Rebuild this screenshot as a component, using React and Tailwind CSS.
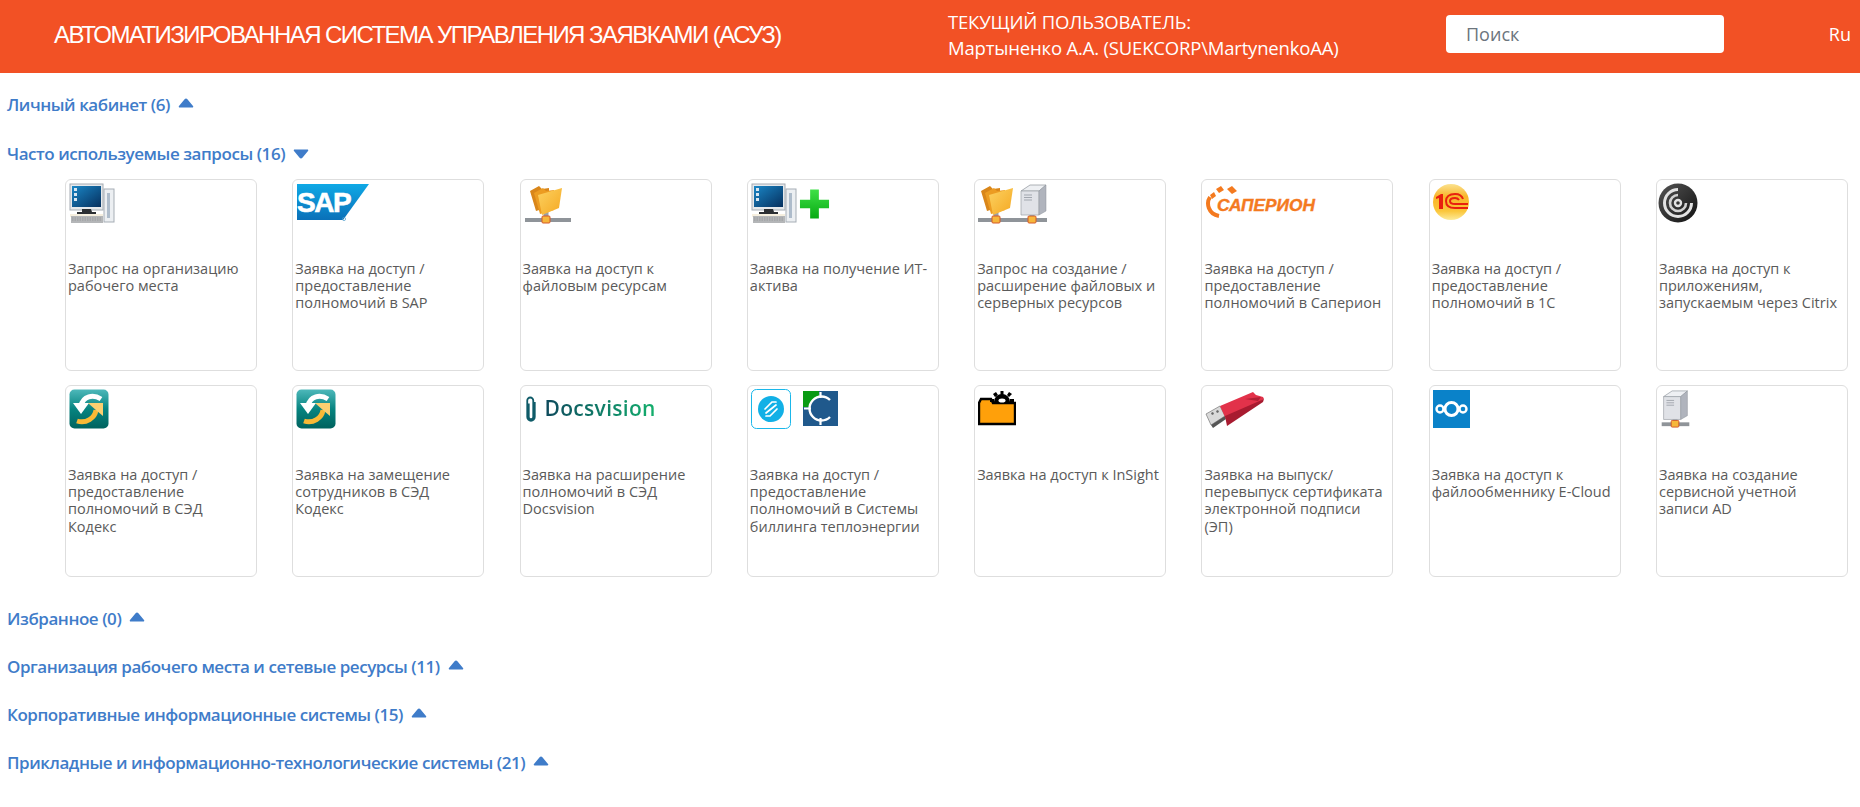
const sans = "font-['Open_Sans','Noto_Sans',sans-serif]";

const Pc = () => (
  <svg width="46" height="42" viewBox="0 0 46 42">
    <defs>
      <linearGradient id="pcScreen" x1="0" y1="0" x2="1" y2="1">
        <stop offset="0" stopColor="#1a86c6" />
        <stop offset="1" stopColor="#06305e" />
      </linearGradient>
    </defs>
    <rect x="1" y="1" width="33" height="26" fill="#e6e9ec" stroke="#a5acb3" />
    <rect x="3" y="3" width="29" height="21" fill="url(#pcScreen)" />
    <rect x="5" y="5" width="3" height="3" fill="#d8e6f2" />
    <rect x="5" y="10" width="3" height="3" fill="#d8e6f2" />
    <rect x="5" y="15" width="3" height="3" fill="#d8e6f2" />
    <path d="M13 26h9l1 3h4v2H8v-2h5z" fill="#2c2f33" />
    <path d="M1 31h33v3H1z" fill="#f6efdf" />
    <rect x="35" y="6" width="10" height="33" fill="#eceff2" stroke="#a6adb5" />
    <rect x="38" y="10" width="3" height="25" fill="#aebccb" />
    <rect x="2" y="33" width="32" height="7" fill="#b4b6b8" />
    <path d="M3 35h30M3 37h30" stroke="#8c8e90" strokeWidth=".7" strokeDasharray="1.5 1" />
  </svg>
);

const Plus = () => (
  <svg width="31" height="32" viewBox="0 0 32 32">
    <defs>
      <linearGradient id="plusGreen" x1="0" y1="0" x2="0" y2="1">
        <stop offset="0" stopColor="#3fe047" />
        <stop offset="1" stopColor="#07aa12" />
      </linearGradient>
    </defs>
    <path d="M11.500 1h9v10.500H31v9H20.500V31h-9V20.500H1v-9h10.500z" fill="url(#plusGreen)" />
  </svg>
);

const Net = ({ x }) => (
  <g>
    <rect x={x - 2.5} y="28" width="5" height="6" fill="#9aa0a6" />
    <rect x={x - 4} y="33" width="8" height="7" rx="1" fill="#f6b73c" stroke="#d4582a" />
  </g>
);

const Folder = () => (
  <g>
    <defs>
      <linearGradient id="folderFront" x1="0" y1="0" x2="1" y2="1">
        <stop offset="0" stopColor="#fcd262" />
        <stop offset="1" stopColor="#f5a821" />
      </linearGradient>
    </defs>
    <path d="M6 8l9-5 3 3 7-1v19l-13 4z" fill="#d9861a" />
    <path d="M10 10l9-5 3 3 8-1v20l-14 4z" fill="#ec9c22" />
    <path d="M14 12l24-7-3 20-17 7z" fill="url(#folderFront)" />
  </g>
);

const FolderNet = () => (
  <svg width="48" height="42" viewBox="0 0 48 42">
    <rect x="1" y="35" width="46" height="4" fill="#8f9499" />
    <Net x="22" />
    <Folder />
  </svg>
);

const Server = ({ x = 0 }) => (
  <g transform={`translate(${x} 0)`}>
    <path d="M3 8l9-6h16l-7 6z" fill="#eef0f3" stroke="#8d929a" strokeWidth=".7" />
    <path d="M3 8h18v24H3z" fill="#e0e2e7" stroke="#9ba0a8" strokeWidth=".7" />
    <path d="M21 8l7-6v26l-7 4z" fill="#b0b4bd" stroke="#8d929a" strokeWidth=".5" />
    <path d="M6 12h8M6 14.500h8M6 17h8" stroke="#a2a7af" />
  </g>
);

const FolderServer = () => (
  <svg width="72" height="42" viewBox="0 0 72 42">
    <rect x="0" y="35" width="69" height="4" fill="#8f9499" />
    <Net x="18" />
    <Net x="54" />
    <g transform="translate(-3 0)">
      <Folder />
    </g>
    <Server x="40" />
  </svg>
);

const ServerNet = () => (
  <svg width="31" height="40" viewBox="0 0 31 42">
    <rect x="1" y="35" width="29" height="4" fill="#8f9499" />
    <Net x="15" />
    <Server x="0" />
  </svg>
);

const Sap = () => (
  <svg width="74" height="40" viewBox="0 0 74 40">
    <defs>
      <linearGradient id="sapBlue" x1="0" y1="0" x2="0" y2="1">
        <stop offset="0" stopColor="#0fa9e6" />
        <stop offset="1" stopColor="#0a70b8" />
      </linearGradient>
    </defs>
    <path d="M1 1h72L47 37H1z" fill="url(#sapBlue)" />
    <text x="1" y="29" fill="#fff" stroke="#fff" strokeWidth=".6" fontFamily="'Liberation Sans',sans-serif" fontWeight="700" fontSize="28" letterSpacing="-1.5">SAP</text>
    <circle cx="48" cy="36" r="1.600" fill="none" stroke="#4a9ccc" strokeWidth=".7" />
  </svg>
);

const Saperion = () => (
  <svg width="114" height="38" viewBox="0 0 114 38">
    <path d="M5 14C1 20 3 31 14 33" fill="none" stroke="#f47a1f" strokeWidth="4" />
    <path d="M5 12l4-3 2 4-4 3zM11 6l5-3 3 4-5 3zM22 6l5-3 5 5-5 3z" fill="#f47a1f" />
    <text x="12" y="28" fill="#f47a1f" stroke="#f47a1f" strokeWidth=".4" fontFamily="'Liberation Sans',sans-serif" fontWeight="700" fontStyle="italic" fontSize="16.5" textLength="98" lengthAdjust="spacingAndGlyphs">САПЕРИОН</text>
  </svg>
);

const OneC = () => (
  <svg width="38" height="38" viewBox="1 0 38 38">
    <defs>
      <linearGradient id="oneCBall" x1="0" y1="0" x2="0" y2="1">
        <stop offset="0" stopColor="#fbe28e" />
        <stop offset=".35" stopColor="#f9b52a" />
        <stop offset=".75" stopColor="#fbc63a" />
        <stop offset="1" stopColor="#fdeb9a" />
      </linearGradient>
    </defs>
    <circle cx="19" cy="19" r="18" fill="url(#oneCBall)" />
    <path d="M4 14l5-3h2v15H7V15l-3 1z" fill="#e8200f" />
    <path d="M36 25H23c-7 0-9-3-9-7s3-7 9-7c4 0 7 2 8 5" fill="none" stroke="#e8200f" strokeWidth="2" />
    <path d="M36 21H23c-3 0-5-1-5-3s2-3 5-3c2 0 3 .5 4 2" fill="none" stroke="#e8200f" strokeWidth="2" />
  </svg>
);

const Citrix = () => (
  <svg width="40" height="40" viewBox="2 0 40 40" className="overflow-visible">
    <defs>
      <linearGradient id="citrixBg" x1="0" y1="0" x2="1" y2="1">
        <stop offset="0" stopColor="#555" />
        <stop offset="1" stopColor="#111" />
      </linearGradient>
    </defs>
    <circle cx="20" cy="20" r="19.500" fill="url(#citrixBg)" />
    <path d="M33.500 20A13.500 13.500 0 1 1 20 6.500" fill="none" stroke="#e2e2e2" strokeWidth="3" />
    <path d="M28 20a8 8 0 1 1-8-8" fill="none" stroke="#d2d2d2" strokeWidth="2.600" />
    <circle cx="20" cy="20" r="3" fill="none" stroke="#e2e2e2" strokeWidth="2.400" />
  </svg>
);

const Kodeks = ({ id }) => (
  <svg width="40" height="40" viewBox="0 0 40 40">
    <defs>
      <linearGradient id={id} x1="0" y1="0" x2="0" y2="1">
        <stop offset="0" stopColor="#4db8ba" />
        <stop offset=".5" stopColor="#078480" />
        <stop offset="1" stopColor="#00625e" />
      </linearGradient>
    </defs>
    <rect x="0.500" y="0.500" width="39" height="39" rx="5" fill={`url(#${id})`} />
    <path d="M32 10C24 5 14 7 12 17" fill="none" stroke="#fff" strokeWidth="5" />
    <path d="M4 14h16l-8 11z" fill="#fff" />
    <path d="M8 32c9 3 18-3 19-11" fill="none" stroke="#f9b936" strokeWidth="5" />
    <path d="M19 14h15v13l-6-5z" fill="#fbcf70" />
  </svg>
);

const Docsvision = () => (
  <svg width="14" height="27" viewBox="0 0 16 36">
    <path d="M5 10v18a3 3 0 0 0 6 0V6a4 4 0 0 0-8 0v22a5 5 0 0 0 10 0V8" fill="none" stroke="#0f5b68" strokeWidth="2.400" />
  </svg>
);

const Billing = () => (
  <div className="flex items-start gap-[12px]">
    <svg width="40" height="40" viewBox="0 0 40 40">
      <rect x="0.500" y="0.500" width="39" height="39" rx="5" fill="#fff" stroke="#1ab7ea" />
      <circle cx="20" cy="20" r="13" fill="#12b0e6" />
      <path d="M14 20l7-7h4M26 20l-7 7h-4M15 24l10-8" stroke="#fff" strokeWidth="1.700" fill="none" strokeLinecap="round" />
    </svg>
    <svg width="35" height="35" viewBox="0 0 35 35" className="mt-[2px]">
      <rect width="35" height="35" fill="#20598c" />
      <path d="M0 0h16v6a12 12 0 0 0-10 10H0z" fill="#0a9b14" />
      <path d="M27 9a12 12 0 1 0 0 17" fill="none" stroke="#fff" strokeWidth="2.400" />
      <path d="M1 17.500h7M17.500 27v7M17.500 1v6" stroke="#fff" strokeWidth="2.200" />
    </svg>
  </div>
);

const InSight = () => (
  <svg width="38" height="37" viewBox="0 0 38 37">
    <path d="M1 14l2-4h10l2 4h22v21H1z" fill="#ffa00a" stroke="#000" strokeWidth="2.400" />
    <g transform="translate(4 1)">
      <path d="M12 12a8 8 0 0 1 16 0z" fill="#000" />
      <path d="M18.500 1h3v4h-3zM11 4l3-2 2 3-3 2zM27 2l3 2-3 3-2-2zM8 9h4v3H8zM28 9h4v3h-4z" fill="#000" />
      <ellipse cx="20" cy="10.500" rx="3.500" ry="2" fill="#fff" />
    </g>
  </svg>
);

const Token = () => (
  <svg width="60" height="42" viewBox="0 0 60 42">
    <path d="M1 25l14-8 5 10-14 9z" fill="#d9d9d9" stroke="#777" strokeWidth=".7" />
    <path d="M6 36l14-9 1 3-13 9z" fill="#555" />
    <path d="M6 24l2-1 1 2-2 1zM11 22l2-1 1 2-2 1z" fill="#666" />
    <path d="M15 17L48 3l3 3 7 2 1 2-36 24-3-6z" fill="#e2324a" />
    <path d="M20 27l39-17-1 3-36 24z" fill="#a81b30" />
    <path d="M40 10l16-2-3 4z" fill="#b11f34" />
  </svg>
);

const ECloud = () => (
  <svg width="37" height="38" viewBox="0 0 37 38" className="mt-[1px]">
    <rect width="37" height="38" fill="#0a82c9" />
    <circle cx="18.500" cy="19" r="6.500" fill="none" stroke="#fff" strokeWidth="3" />
    <circle cx="7" cy="19" r="3.500" fill="none" stroke="#fff" strokeWidth="2.400" />
    <circle cx="30" cy="19" r="3.500" fill="none" stroke="#fff" strokeWidth="2.400" />
  </svg>
);

const frequent = [
  { icon: <Pc />, text: "Запрос на организацию рабочего места" },
  { icon: <Sap />, text: "Заявка на доступ / предоставление полномочий в SAP" },
  { icon: <FolderNet />, text: "Заявка на доступ к файловым ресурсам" },
  {
    icon: (
      <div className="flex items-center gap-[2px]">
        <Pc />
        <Plus />
      </div>
    ),
    text: "Заявка на получение ИТ-актива",
  },
  { icon: <FolderServer />, text: "Запрос на создание / расширение файловых и серверных ресурсов" },
  { icon: <Saperion />, text: "Заявка на доступ / предоставление полномочий в Саперион" },
  { icon: <OneC />, text: "Заявка на доступ / предоставление полномочий в 1С" },
  { icon: <Citrix />, text: "Заявка на доступ к приложениям, запускаемым через Citrix" },
  { icon: <Kodeks id="kodeksA" />, text: "Заявка на доступ / предоставление полномочий в СЭД Кодекс" },
  { icon: <Kodeks id="kodeksB" />, text: "Заявка на замещение сотрудников в СЭД Кодекс" },
  {
    icon: (
      <div className="flex h-[40px] items-center gap-[7px]">
        <Docsvision />
        <span className="bg-gradient-to-r from-[#0f4a5c] to-[#14b06c] bg-clip-text text-[21px] font-semibold tracking-[0.3px] text-transparent">Docsvision</span>
      </div>
    ),
    text: "Заявка на расширение полномочий в СЭД Docsvision",
  },
  { icon: <Billing />, text: "Заявка на доступ / предоставление полномочий в Системы биллинга теплоэнергии" },
  { icon: <InSight />, text: "Заявка на доступ к InSight" },
  { icon: <Token />, text: "Заявка на выпуск/ перевыпуск сертификата электронной подписи (ЭП)" },
  { icon: <ECloud />, text: "Заявка на доступ к файлообменнику E-Cloud" },
  { icon: <ServerNet />, text: "Заявка на создание сервисной учетной записи AD" },
];

const Caret = ({ open }) => (
  <svg width="16" height="10" viewBox="0 0 16 10" className={open ? "rotate-180" : ""}>
    <path d="M8 .5c.5 0 1 .3 1.400.8L15 8c.6.8.2 1.500-.8 1.500H1.800C.8 9.500.4 8.800 1 8l5.600-6.700C7 .8 7.500.5 8 .5z" fill="#3f7cc9" />
  </svg>
);

const Section = ({ title, open }) => (
  <div className="flex h-[24px] items-center gap-[8px]">
    <span className="text-[17px] font-semibold leading-[24px] tracking-[-0.45px] text-[#3f7cc9]">{title}</span>
    <span className={open ? "" : "-mt-[5px]"}>
      <Caret open={open} />
    </span>
  </div>
);

export default function App() {
  return (
    <div className={`${sans} min-h-[807px] bg-white`}>
      <header className="flex h-[73px] items-center bg-[#f25125] text-white">
        <div className="mb-[4px] w-[948px] pl-[54px] font-['Liberation_Sans',sans-serif] text-[24px] tracking-[-1.55px]">
          АВТОМАТИЗИРОВАННАЯ СИСТЕМА УПРАВЛЕНИЯ ЗАЯВКАМИ (АСУЗ)
        </div>
        <div className="mb-[4px] w-[498px] text-[18.500px] leading-[26px] tracking-[-0.18px]">
          <div>ТЕКУЩИЙ ПОЛЬЗОВАТЕЛЬ:</div>
          <div>Мартыненко А.А. (SUEKCORP\MartynenkoAA)</div>
        </div>
        <input
          placeholder="Поиск"
          className="mb-[5px] h-[38px] w-[278px] rounded-[4px] bg-white px-[20px] text-[18px] text-[#495057] outline-none placeholder:text-[#6c757d]"
        />
        <div className="mb-[5px] ml-auto pr-[9px] text-[18px]">Ru</div>
      </header>

      <div className="flex flex-col px-[7px] pt-[20px]">
        <Section title="Личный кабинет (6)" />
        <div className="mt-[25px]">
          <Section title="Часто используемые запросы (16)" open />
        </div>
        <div className="mt-[13px] grid grid-cols-[repeat(8,192px)] justify-between gap-y-[14px] pl-[58px] pr-[5px]">
          {frequent.map((item) => (
            <div key={item.text} className="flex h-[192px] flex-col rounded-[6px] border border-[#dedede] px-[2px] pt-[3px]">
              <div className="h-[77px] pl-[1px]">{item.icon}</div>
              <div className="text-[14.500px] leading-[17.200px] text-[#5a5a5a]">{item.text}</div>
            </div>
          ))}
        </div>
        <div className="mt-[30px] flex flex-col gap-[24px]">
          <Section title="Избранное (0)" />
          <Section title="Организация рабочего места и сетевые ресурсы (11)" />
          <Section title="Корпоративные информационные системы (15)" />
          <Section title="Прикладные и информационно-технологические системы (21)" />
        </div>
      </div>
    </div>
  );
}
